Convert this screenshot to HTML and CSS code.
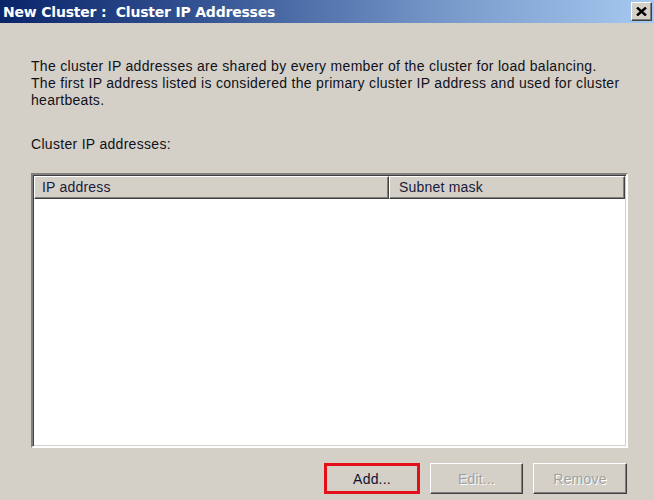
FILE: index.html
```html
<!DOCTYPE html>
<html>
<head>
<meta charset="utf-8">
<link rel="stylesheet" href="styles.css">
</head>
<body>
<div class="window">
  <div class="titlebar">
    <span class="title">New Cluster :  Cluster IP Addresses</span>
    <button class="close" aria-label="Close">
      <svg width="11" height="9" viewBox="0 0 11 9"><path d="M1 0.5 L10 8.5 M10 0.5 L1 8.5" stroke="#000" stroke-width="2.4"/></svg>
    </button>
  </div>
  <div class="content">
    <p class="intro">The cluster IP addresses are shared by every member of the cluster for load balancing.<br>The first IP address listed is considered the primary cluster IP address and used for cluster<br>heartbeats.</p>
    <p class="label">Cluster IP addresses:</p>
    <div class="listbox">
      <div class="header">
        <div class="col col-ip">IP address</div>
        <div class="col col-mask">Subnet mask</div>
      </div>
      <div class="rows"></div>
    </div>
    <div class="buttons">
      <div class="highlight"><button class="btn btn-add">Add...</button></div>
      <button class="btn btn-edit" disabled>Edit...</button>
      <button class="btn btn-remove" disabled>Remove</button>
    </div>
  </div>
</div>
</body>
</html>
```

FILE: styles.css
```css
html, body {
  margin: 0;
  padding: 0;
  background: #d4d0c8;
}
.window {
  width: 654px;
  height: 500px;
  background: #d4d0c8;
  font-family: "Liberation Sans", Arial, sans-serif;
  font-size: 14px;
  color: #000;
  overflow: hidden;
}
.titlebar {
  height: 23px;
  display: flex;
  align-items: center;
  justify-content: space-between;
  padding: 0 2px 0 3px;
  box-sizing: border-box;
  background: linear-gradient(to right, #0a246a 0%, #3a5a98 35%, #7a9ccc 70%, #a6caf0 100%);
}
.title {
  font-family: "DejaVu Sans", Verdana, sans-serif;
  font-weight: bold;
  font-size: 14px;
  color: #fff;
  white-space: pre;
  letter-spacing: -0.2px;
}
.close {
  width: 21px;
  height: 19px;
  padding: 0;
  margin: 0;
  background: #d4d0c8;
  border: 1px solid;
  border-color: #ffffff #404040 #404040 #ffffff;
  box-shadow: inset -1px -1px 0 #808080;
  display: flex;
  align-items: center;
  justify-content: center;
}
.content {
  padding: 0 26px 0 31px;
}
.intro {
  margin: 35px 0 0 0;
  line-height: 17px;
  white-space: nowrap;
  letter-spacing: 0.3px;
  color: #101018;
}
.label {
  margin: 27px 0 0 0;
  line-height: 17px;
  letter-spacing: 0.3px;
  color: #101018;
}
.listbox {
  margin-top: 20px;
  height: 275px;
  box-sizing: border-box;
  border: 2px solid;
  border-color: #808080 #ffffff #ffffff #808080;
  box-shadow: inset 1px 1px 0 #404040, inset -1px -1px 0 #d4d0c8;
  background: #fff;
  display: flex;
  flex-direction: column;
  padding: 1px 1px 1px 1px;
}
.header {
  display: flex;
  height: 23px;
  flex: none;
}
.col {
  box-sizing: border-box;
  height: 23px;
  background: #d4d0c8;
  border: 1px solid;
  border-color: #ffffff #404040 #404040 #ffffff;
  box-shadow: inset -1px -1px 0 #808080;
  padding-left: 7px;
  line-height: 20px;
  color: #1a1a3a;
  letter-spacing: 0.2px;
}
.col-ip {
  width: 355px;
}
.col-mask {
  flex: 1;
  padding-left: 9px;
}
.rows {
  flex: 1;
  background: #fff;
}
.buttons {
  margin-top: 15px;
  display: flex;
  justify-content: flex-end;
  align-items: flex-start;
  gap: 10px;
  padding-right: 1px;
}
.highlight {
  border: 3px solid #e3101c;
  display: flex;
  margin-left: -2px;
}
.btn {
  width: 93px;
  height: 31px;
  box-sizing: border-box;
  font-family: "Liberation Sans", Arial, sans-serif;
  font-size: 14px;
  background: #d4d0c8;
  border: 1px solid;
  border-color: #ffffff #404040 #404040 #ffffff;
  box-shadow: inset -1px -1px 0 #808080;
  padding: 0;
  color: #000;
  letter-spacing: 0.2px;
}
.btn-add {
  width: 90px;
  height: 25px;
  border: 1px solid #d4d0c8;
  box-shadow: none;
  color: #101030;
}
.btn-remove {
  width: 94px;
}
.btn[disabled] {
  color: #a0a0a0;
  text-shadow: 1px 1px 0 #ffffff;
}
```
